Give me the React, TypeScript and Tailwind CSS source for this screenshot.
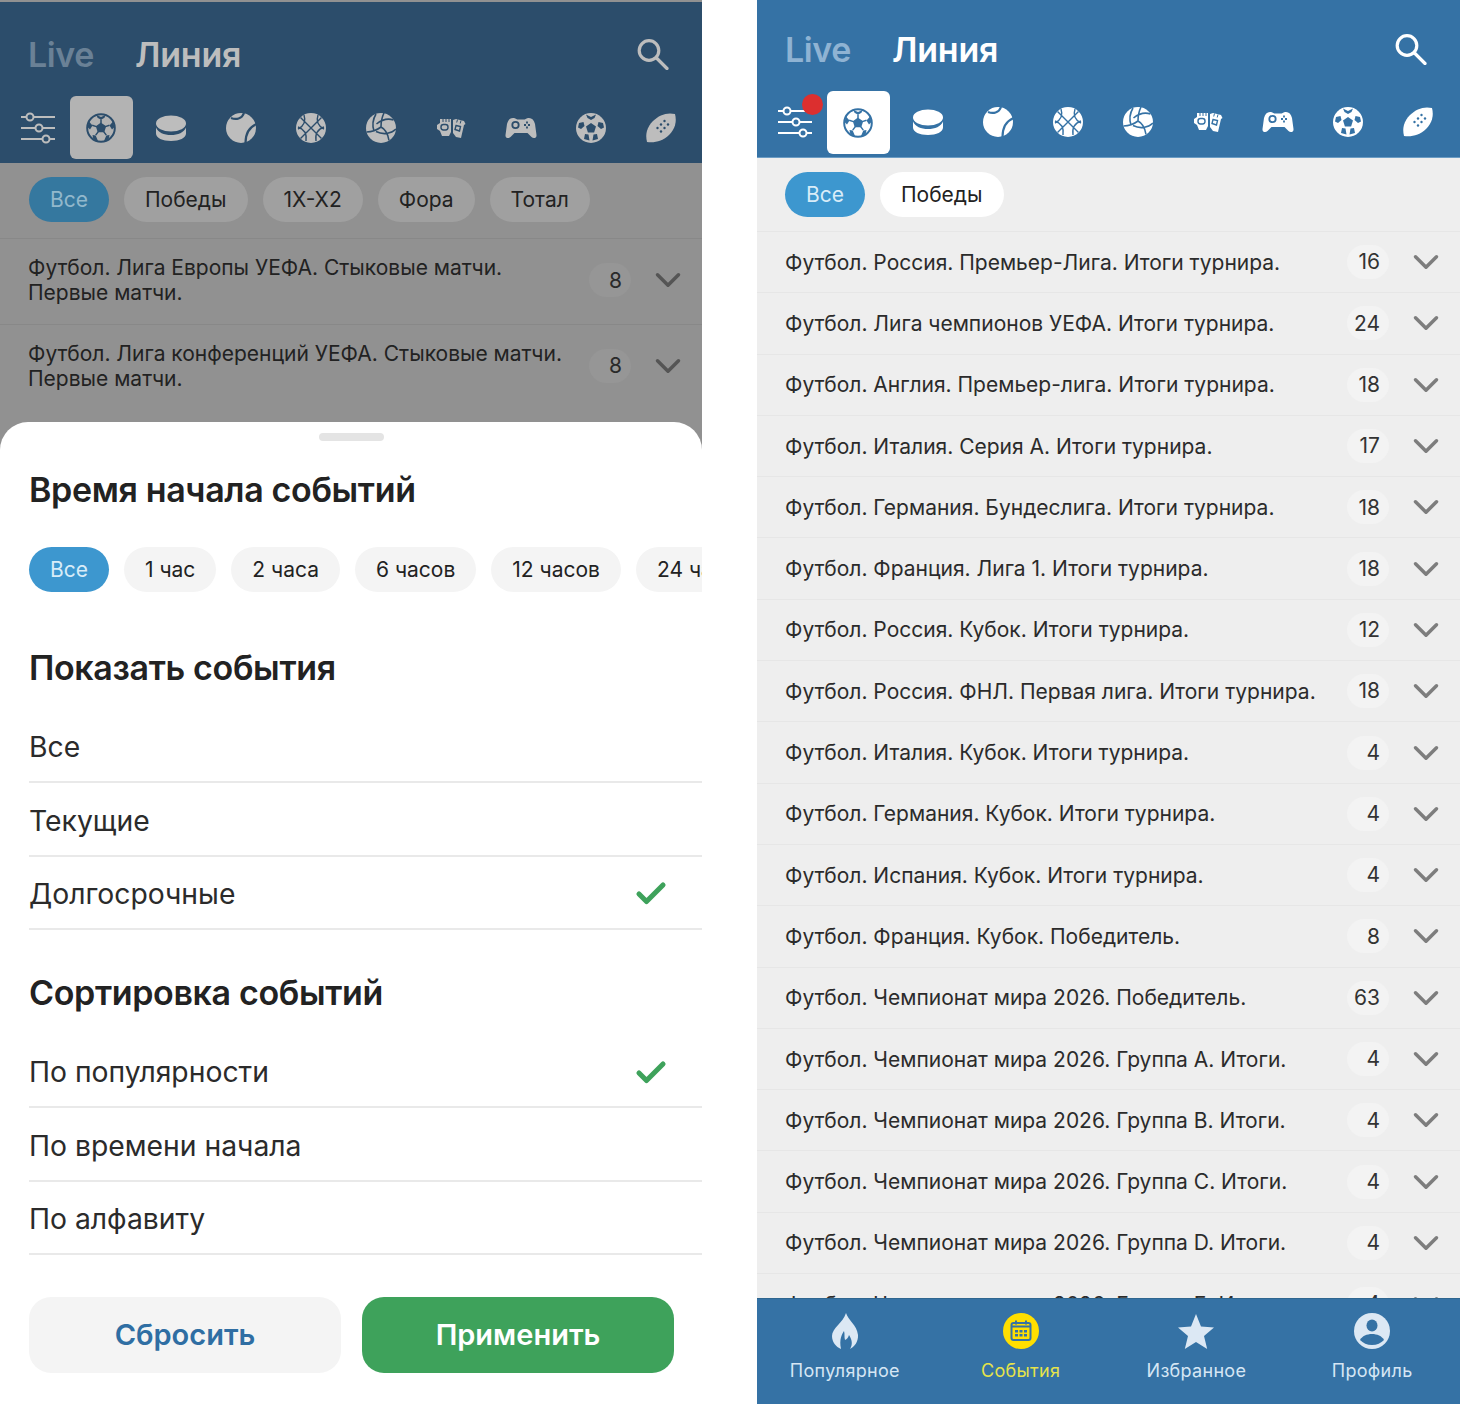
import { Check, ChevronDown } from "lucide-react";

const rightRows = [
  ["Футбол. Россия. Премьер-Лига. Итоги турнира.", "16"],
  ["Футбол. Лига чемпионов УЕФА. Итоги турнира.", "24"],
  ["Футбол. Англия. Премьер-лига. Итоги турнира.", "18"],
  ["Футбол. Италия. Серия А. Итоги турнира.", "17"],
  ["Футбол. Германия. Бундеслига. Итоги турнира.", "18"],
  ["Футбол. Франция. Лига 1. Итоги турнира.", "18"],
  ["Футбол. Россия. Кубок. Итоги турнира.", "12"],
  ["Футбол. Россия. ФНЛ. Первая лига. Итоги турнира.", "18"],
  ["Футбол. Италия. Кубок. Итоги турнира.", "4"],
  ["Футбол. Германия. Кубок. Итоги турнира.", "4"],
  ["Футбол. Испания. Кубок. Итоги турнира.", "4"],
  ["Футбол. Франция. Кубок. Победитель.", "8"],
  ["Футбол. Чемпионат мира 2026. Победитель.", "63"],
  ["Футбол. Чемпионат мира 2026. Группа А. Итоги.", "4"],
  ["Футбол. Чемпионат мира 2026. Группа В. Итоги.", "4"],
  ["Футбол. Чемпионат мира 2026. Группа С. Итоги.", "4"],
  ["Футбол. Чемпионат мира 2026. Группа D. Итоги.", "4"],
  ["Футбол. Чемпионат мира 2026. Группа Е. Итоги.", "4"],
];

const BLUE = "#3572a5";
const DIM_BLUE = "#2c4d6b";

const Filters = () => (
  <svg width="36" height="32" viewBox="0 0 36 32" fill="none" stroke="currentColor" strokeWidth="2">
    <path d="M1 5h5M14 5h21M1 16h14M23 16h12M1 27h21M30 27h5" />
    <circle cx="10" cy="5" r="3.5" />
    <circle cx="19" cy="16" r="3.5" />
    <circle cx="26" cy="27" r="3.5" />
  </svg>
);

const SearchGlass = () => (
  <svg width="32" height="32" viewBox="0 0 32 32" fill="none" stroke="currentColor" strokeWidth="3.2" strokeLinecap="round">
    <circle cx="12" cy="12.500" r="9.800" />
    <path d="M19.500 20l10.500 10.500" />
  </svg>
);

const SoccerOutline = ({ bg }: { bg: string }) => (
  <svg width="32" height="32" viewBox="0 0 32 32" fill="none" stroke={bg} strokeWidth="1.500">
    <circle cx="16" cy="16" r="13.800" strokeWidth="2" />
    <path d="M16 11.500l4.300 3.100-1.600 5h-5.400l-1.600-5z" fill={bg} />
    <path d="M16 11.500V7.500M20.300 14.600l4.200-1.300M18.700 19.600l2.600 3.500M13.300 19.600l-2.600 3.500M11.400 14.600l-4.200-1.300" />
    <g fill={bg} stroke="none">
      <path d="M11.500 3l4.500 2 4.500-2-1 2.800-3.500 2-3.500-2z" />
      <path d="M28 9.500l1.500 5.500-2.500 2.500-2.500-4z" />
      <path d="M4 9.500l-1.500 5.500 2.500 2.500 2.500-4z" />
      <path d="M24.500 23l-1 5-4.500 1 2.300-5.500z" />
      <path d="M7.500 23l1 5 4.500 1-2.300-5.500z" />
    </g>
  </svg>
);

const Puck = () => (
  <svg width="32" height="32" viewBox="0 0 32 32" fill="currentColor">
    <ellipse cx="16" cy="11.500" rx="15" ry="8" />
    <path d="M1 15.500c2 5 8 7.500 15 7.500s13-2.500 15-7.500v6c0 4.500-6.500 7.500-15 7.500S1 26 1 21.500z" />
  </svg>
);

const Tennis = ({ bg }: { bg: string }) => (
  <svg width="32" height="32" viewBox="0 0 32 32" fill="currentColor" stroke={bg} strokeWidth="2.200">
    <circle cx="16" cy="16" r="15" stroke="none" />
    <path d="M6 6c5 2 11 1 13-5M31.500 12c-7 3-11 10-11 19" fill="none" />
  </svg>
);

const Basketball = ({ bg }: { bg: string }) => (
  <svg width="32" height="32" viewBox="0 0 32 32" fill="currentColor" stroke={bg} strokeWidth="1.400">
    <circle cx="16" cy="16" r="15" stroke="none" />
    <path d="M5.500 5.500l21 21M26.500 5.500l-21 21M9 3c2 6 0 11-6 14M29 15c-6 2-9 7-8 14M23 3c-2 6 0 11 6 14M3 15c6 2 9 7 8 14" fill="none" />
  </svg>
);

const Volleyball = ({ bg }: { bg: string }) => (
  <svg width="32" height="32" viewBox="0 0 32 32" fill="currentColor" stroke={bg} strokeWidth="1.600">
    <circle cx="16" cy="16" r="15" stroke="none" />
    <path d="M16 15c0-5 1-10 3-14M16 15c-4 3-9 5-14.500 5M16 15c4 2 7 7 8 13.500M11 2c-3 5-4 11-2 17M28.500 8c-6-2-12 0-17 4M31 17c-5 5-13 6-20 2.500" fill="none" />
  </svg>
);

const Gloves = ({ bg }: { bg: string }) => (
  <svg width="32" height="32" viewBox="0 0 32 32" fill="currentColor">
    <path d="M2 13l3-2V7h11v13l-2 4H7l-2-5-3-2z" />
    <path d="M18 8l3-1 8 2 1.500 3-1.500 1-3 13-5-1-3-4z" />
    <rect x="6" y="12.500" width="7" height="5.500" rx="2.400" fill="none" stroke={bg} strokeWidth="1.400" />
    <path d="M21 13.500l4.500 1-1 4.500-4.500-1.500z" fill="none" stroke={bg} strokeWidth="1.400" />
    <path d="M8 7v3M11 7v3M14 7v3M22.500 7.500l-.8 3M26 8.500l-.8 3" stroke={bg} strokeWidth="1" />
  </svg>
);

const Gamepad = ({ bg }: { bg: string }) => (
  <svg width="32" height="32" viewBox="0 0 32 32" fill="currentColor">
    <path d="M8 6c3 0 3 1.500 5 1.500h6C21 7.500 21 6 24 6c3 0 5 2 6 6l1.500 11c.3 3-3 4-5 2l-4-4h-13l-4 4c-2 2-5.300 1-5-2L2 12c1-4 3-6 6-6z" />
    <circle cx="10.500" cy="13" r="3.200" fill="none" stroke={bg} strokeWidth="1.800" />
    <path d="M22 9.500v2M22 14.500v2M19 13h2M23 13h2" stroke={bg} strokeWidth="1.800" />
  </svg>
);

const SoccerSolid = ({ bg }: { bg: string }) => (
  <svg width="32" height="32" viewBox="0 0 32 32" fill="currentColor">
    <circle cx="16" cy="16" r="15" />
    <g fill={bg}>
      <path d="M16 11l5 3.600-1.900 5.900h-6.200L11 14.600z" />
      <path d="M11 2.500l5 2.500 5-2.500-1.500 3.500-3.500 2-3.500-2zM4 11l4.500-1 1 4-3.500 3-3-1.500zM28 11l-4.500-1-1 4 3.500 3 3-1.500zM9 27l1-5 3.500.5 1 6zM23 27l-1-5-3.500.5-1 6z" />
    </g>
  </svg>
);

const Rugby = ({ bg }: { bg: string }) => (
  <svg width="32" height="32" viewBox="0 0 32 32" fill="currentColor">
    <path d="M30 2c2 8 0 15-6 21S10 31 2 30c-2-8 0-15 6-21S22 0 30 2z" />
    <g fill={bg}>
      <circle cx="12.500" cy="16" r="1.200" />
      <circle cx="16" cy="12.500" r="1.200" />
      <circle cx="19.500" cy="9" r="1.200" />
      <circle cx="16" cy="19.500" r="1.200" />
      <circle cx="19.500" cy="16" r="1.200" />
      <circle cx="23" cy="12.500" r="1.200" />
    </g>
  </svg>
);

const sportIcons = [Puck, Tennis, Basketball, Volleyball, Gloves, Gamepad, SoccerSolid, Rugby];

const Header = ({ dimmed }: { dimmed?: boolean }) => {
  const bg = dimmed ? DIM_BLUE : BLUE;
  return (
    <div className={dimmed ? "mt-[2px] pt-[3px] bg-[#2c4d6b] text-[#bdbdbd]" : "bg-[#3572a5] text-white"}>
      <div className="h-[91px] pt-[7px] pl-[28px] pr-[33px] flex items-center">
        <span className={`text-[34px] font-semibold tracking-[-0.4px] mr-[41px] ${dimmed ? "text-[#6a8196]" : "text-[#8fb3d3]"}`}>Live</span>
        <span className="text-[34px] font-semibold tracking-[-0.2px]">Линия</span>
        <div className="ml-auto">
          <SearchGlass />
        </div>
      </div>
      <div className={`flex h-[67px] pb-[4px] ${dimmed ? "" : "border-b border-[#6b9cc4]"}`}>
        <div className="relative w-[66px] flex items-center justify-end pr-[10px]">
          <Filters />
          {!dimmed && <div className="absolute left-[45px] top-[3px] w-[21px] h-[21px] rounded-full bg-[#dc2f2f]" />}
        </div>
        <div className="w-[70px] flex justify-center">
          <div className={`w-[63px] h-[63px] rounded-[6px] flex items-center justify-center ${dimmed ? "bg-[#b3b3b3]" : "bg-white"}`}>
            <SoccerOutline bg={bg} />
          </div>
        </div>
        {sportIcons.map((Icon, i) => (
          <div key={i} className="w-[70px] flex items-center justify-center">
            <Icon bg={bg} />
          </div>
        ))}
      </div>
    </div>
  );
};

const chipStyles = {
  active: "bg-[#3d97cf] text-[#d8ecf8]",
  white: "bg-white text-[#222]",
  soft: "bg-[#f4f4f4] text-[#222]",
  dim: "bg-[#a0a0a0] text-[#222]",
  dimActive: "bg-[#35789f] text-[#92b8cc]",
};

const Chip = ({ label, kind }: { label: string; kind: keyof typeof chipStyles }) => (
  <div className={`h-[45px] px-[21px] rounded-full flex items-center shrink-0 text-[21px] ${chipStyles[kind]}`}>{label}</div>
);

const Count = ({ value, dimmed }: { value: string; dimmed?: boolean }) => (
  <div className="pr-[3px] shrink-0">
    <span className={`w-[42px] h-[34px] pr-[9px] rounded-full flex items-center justify-end text-[21px] ${dimmed ? "bg-[#969696] text-[#2a2a2a]" : "bg-[#f3f3f3] text-[#333]"}`}>
      {value}
    </span>
  </div>
);

const Arrow = ({ dimmed }: { dimmed?: boolean }) => (
  <div className="w-[68px] flex justify-center">
    <ChevronDown size={42} strokeWidth={2} className={dimmed ? "text-[#555]" : "text-[#7d7d7d]"} />
  </div>
);

const LeagueRow = ({ title, count }: { title: string; count: string }) => (
  <div className="h-[61.3px] shrink-0 flex items-center pl-[28px] border-t border-[#e6e6e6]">
    <div className="flex-1 min-w-0 text-[21px] leading-[25px] text-[#2b2b2b] whitespace-nowrap">{title}</div>
    <Count value={count} />
    <Arrow />
  </div>
);

const OptionRow = ({ label, checked }: { label: string; checked?: boolean }) => (
  <div className="h-[73.33px] flex items-center justify-between border-b-2 border-[#e9e9e9] pr-[33px] pt-[4px] text-[28.3px] text-[#2b2b2b]">
    {label}
    {checked && <Check size={36} strokeWidth={3.4} className="text-[#3ea25b]" />}
  </div>
);

const SheetTitle = ({ className, children }: { className: string; children: string }) => (
  <h2 className={`${className} pl-[29px] text-[34px] leading-[40px] tracking-[-0.35px] font-semibold text-[#222]`}>{children}</h2>
);

const FilterSheet = () => (
  <div className="absolute left-0 right-0 top-[422px] bottom-0 bg-white rounded-t-[28px] overflow-hidden">
    <div className="mx-auto mt-[11px] w-[65px] h-[8px] rounded-full bg-[#e4e4e4]" />
    <SheetTitle className="mt-[29px]">Время начала событий</SheetTitle>
    <div className="mt-[37px] pl-[29px] flex gap-[15px] overflow-hidden">
      <Chip label="Все" kind="active" />
      <Chip label="1 час" kind="soft" />
      <Chip label="2 часа" kind="soft" />
      <Chip label="6 часов" kind="soft" />
      <Chip label="12 часов" kind="soft" />
      <Chip label="24 часа" kind="soft" />
    </div>
    <SheetTitle className="mt-[56px]">Показать события</SheetTitle>
    <div className="mt-[22px] ml-[29px]">
      <OptionRow label="Все" />
      <OptionRow label="Текущие" />
      <OptionRow label="Долгосрочные" checked />
    </div>
    <SheetTitle className="mt-[43px]">Сортировка событий</SheetTitle>
    <div className="mt-[22px] ml-[29px]">
      <OptionRow label="По популярности" checked />
      <OptionRow label="По времени начала" />
      <OptionRow label="По алфавиту" />
    </div>
    <div className="mt-[42px] pl-[29px] pr-[28px] flex gap-[21px]">
      <button className="flex-1 h-[76px] rounded-[22px] bg-[#f4f4f4] text-[#2f6ea3] text-[29px] font-semibold">Сбросить</button>
      <button className="flex-1 h-[76px] rounded-[22px] bg-[#3ea25b] text-white text-[29px] font-semibold">Применить</button>
    </div>
  </div>
);

const Flame = () => (
  <svg width="28" height="36" viewBox="0 0 28 36" fill="#dce8f4">
    <path d="M15 0c2 7 11 12 12 22 .5 7-4 12-8 14 3-5 2-9-1-14-1 3-2 4-4 5-1-3 0-6-1-9-2 3-5 8-3 18-5-2-9-7-9-13C1 15 12 10 15 0z" />
  </svg>
);

const CalendarBadge = () => (
  <svg width="36" height="36" viewBox="0 0 36 36">
    <circle cx="18" cy="18" r="18" fill="#ffdf00" />
    <rect x="8.500" y="10" width="19" height="17" rx="2" fill="none" stroke={BLUE} strokeWidth="2" />
    <path d="M8.500 13.500h19M13 7.500v4M23 7.500v4" stroke={BLUE} strokeWidth="2" />
    <path d="M12 17h3v2.500h-3zM16.500 17h3v2.500h-3zM21 17h3v2.500h-3zM12 21h3v2.500h-3zM16.500 21h3v2.500h-3zM21 21h3v2.500h-3z" fill={BLUE} />
  </svg>
);

const StarIcon = () => (
  <svg width="36" height="36" viewBox="0 0 36 36" fill="#dce8f4">
    <path d="M18 1l5 12.500 13 1-10 8.500 3.200 13L18 29l-11.200 7L10 23 0 14.500l13-1z" />
  </svg>
);

const ProfileIcon = () => (
  <svg width="36" height="36" viewBox="0 0 36 36">
    <circle cx="18" cy="18" r="18" fill="#dce8f4" />
    <ellipse cx="18" cy="12.500" rx="5.500" ry="6" fill={BLUE} />
    <path d="M6 27c2-4 7-6 12-6s10 2 12 6c-3 3-7 5-12 5s-9-2-12-5z" fill={BLUE} />
  </svg>
);

const navItems = [
  { label: "Популярное", Icon: Flame },
  { label: "События", Icon: CalendarBadge, active: true },
  { label: "Избранное", Icon: StarIcon },
  { label: "Профиль", Icon: ProfileIcon },
];

const BottomNav = () => (
  <div className="h-[106px] shrink-0 bg-[#3572a5] grid grid-cols-4 border-t border-[#2f668f]">
    {navItems.map(({ label, Icon, active }) => (
      <div key={label} className="flex flex-col items-center pt-[14px]">
        <div className="h-[36px] flex items-center justify-center">
          <Icon />
        </div>
        <span className={`mt-[11px] text-[18px] leading-[22px] tracking-[0.3px] ${active ? "text-[#e6e34a]" : "text-[#d6e6f4]"}`}>
          {label}
        </span>
      </div>
    ))}
  </div>
);

const LeftPane = () => (
  <div className="relative w-[702px] h-[1404px] overflow-hidden bg-[#919191]">
    <Header dimmed />
    <div className="flex gap-[15px] pl-[29px] pt-[14px] pb-[16px]">
      <Chip label="Все" kind="dimActive" />
      <Chip label="Победы" kind="dim" />
      <Chip label="1X-X2" kind="dim" />
      <Chip label="Фора" kind="dim" />
      <Chip label="Тотал" kind="dim" />
    </div>
    {[
      ["Футбол. Лига Европы УЕФА. Стыковые матчи.", "Первые матчи."],
      ["Футбол. Лига конференций УЕФА. Стыковые матчи.", "Первые матчи."],
    ].map(([a, b]) => (
      <div key={a} className="h-[85.500px] pb-[2px] flex items-center pl-[28px] border-t border-[#888888]">
        <div className="flex-1 min-w-0 text-[21px] leading-[25px] text-[#222]">
          {a}
          <br />
          {b}
        </div>
        <Count value="8" dimmed />
        <Arrow dimmed />
      </div>
    ))}
    <FilterSheet />
  </div>
);

const RightPane = () => (
  <div className="w-[703px] h-[1404px] flex flex-col overflow-hidden bg-[#eeeeee]">
    <Header />
    <div className="flex gap-[15px] pl-[28px] pt-[14px] pb-[14px]">
      <Chip label="Все" kind="active" />
      <Chip label="Победы" kind="white" />
    </div>
    <div className="flex-1 min-h-0 overflow-hidden flex flex-col">
      {rightRows.map(([title, count]) => (
        <LeagueRow key={title} title={title} count={count} />
      ))}
    </div>
    <BottomNav />
  </div>
);

export default function App() {
  return (
    <div className="w-[1460px] h-[1404px] bg-white flex gap-[55px] font-[Inter,'Noto_Sans',sans-serif]">
      <LeftPane />
      <RightPane />
    </div>
  );
}
